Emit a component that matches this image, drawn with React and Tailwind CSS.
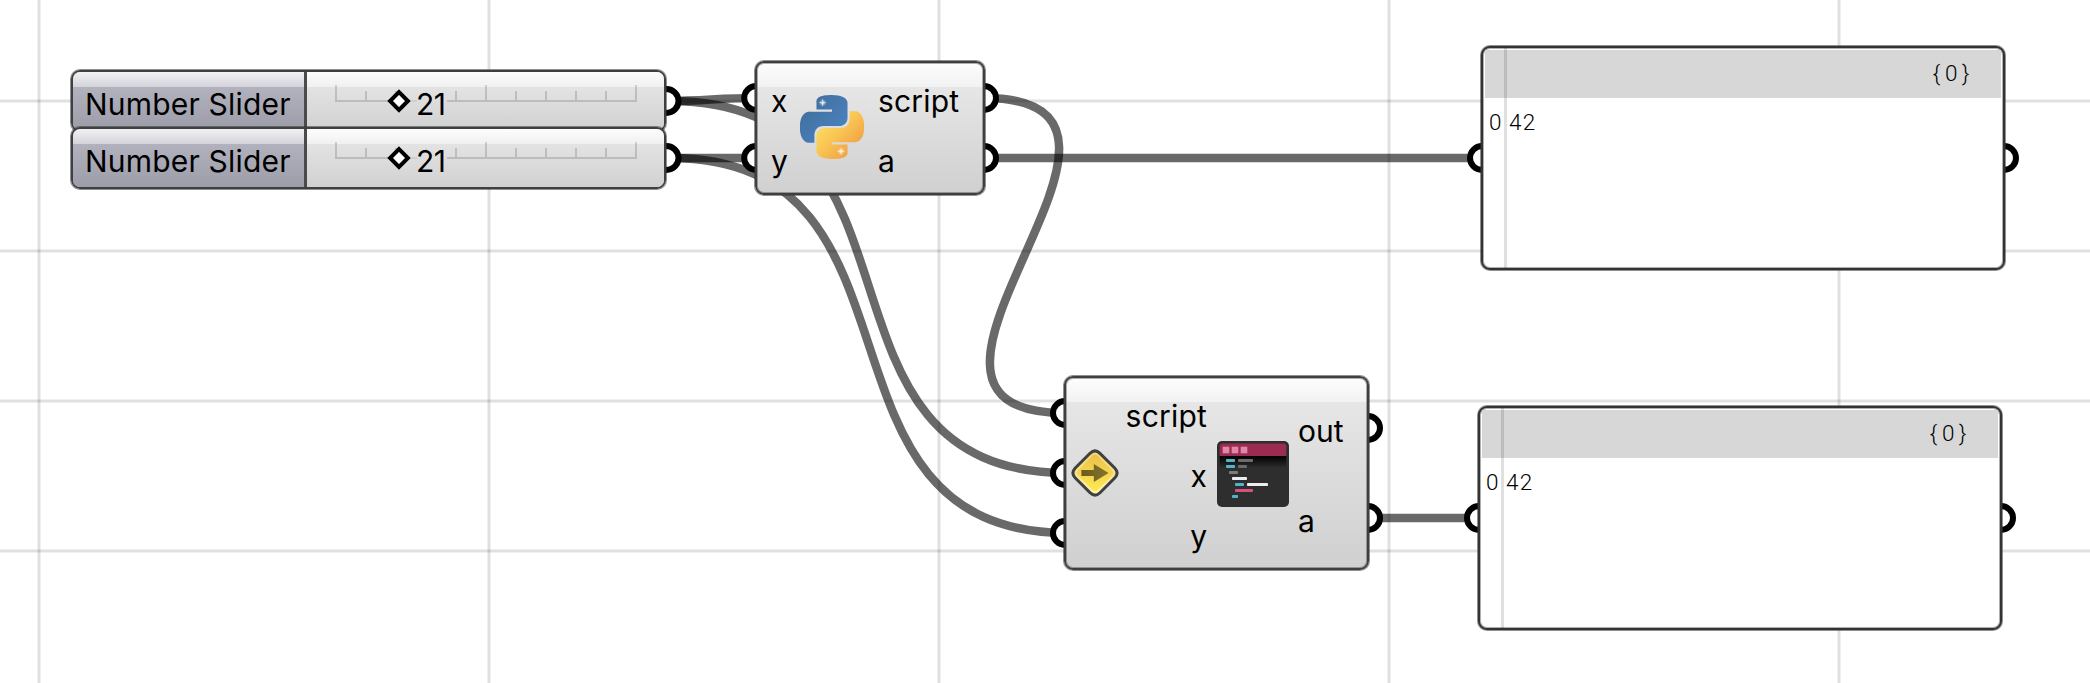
const NODE =
  "absolute box-border rounded-[9px] border-2 border-[#3e3f3f] shadow-[0_0_0_1px_rgba(50,54,50,0.55),inset_0_0_0_1px_rgba(50,54,50,0.4)]";
const LABEL = "text-[30px] leading-[60px] text-black whitespace-nowrap";

const wires = [
  "M667 101C705 101 718 98 756 98",
  "M667 158H756",
  "M670 101C948 101 790 473 1068 473",
  "M670 158C944 158 794 533 1068 533",
  "M984 98C1206 98 843 413 1065 413",
  "M984 158H1482",
  "M1368 518H1479",
];

const grips = [
  [666.5, 101], [666.5, 158], [756.2, 98], [756.2, 158], [984, 98], [984, 158],
  [1065, 413], [1065, 473], [1065, 533], [1368, 428], [1368, 518],
  [1482, 158], [2004, 158], [1479, 518], [2001, 518],
];

function Canvas() {
  return (
    <svg className="absolute inset-0" width="2090" height="683" viewBox="0 0 2090 683" fill="none">
      <g stroke="#000" strokeOpacity="0.12" strokeWidth="3">
        {[39, 489, 939, 1389, 1839].map((x) => <path key={x} d={`M${x} 0V683`} />)}
        {[101, 251, 401, 551].map((y) => <path key={y} d={`M0 ${y}H2090`} />)}
      </g>
      {wires.map((d) => <path key={d} d={d} stroke="#000" strokeOpacity="0.59" strokeWidth="8.5" />)}
      {grips.map(([x, y]) => (
        <circle key={`${x}-${y}`} cx={x} cy={y} r="12" fill="#fff" stroke="#000" strokeWidth="6" />
      ))}
    </svg>
  );
}

function Track() {
  const ticks = [0, 1, 2, 4, 5, 6, 7, 8, 9, 10];
  return (
    <svg width="358" height="58" viewBox="308 72 358 58" className="absolute inset-0" fill="none">
      <g stroke="#000" strokeOpacity="0.15" strokeWidth="2">
        <path d="M336 101H389M448 101H638" />
        <path d="M412 101H418" strokeOpacity="0.06" />
        {ticks.map((i) => (
          <path key={i} d={`M${337 + i * 30} ${i % 5 === 0 ? 85 : 91}V100`} />
        ))}
        <path d="M427 91V94" strokeOpacity="0.06" />
      </g>
      <path d="M400 92.1L408.9 101L400 109.9L391.1 101Z" fill="#fff" stroke="#000" strokeWidth="4" />
    </svg>
  );
}

function Slider({ className }) {
  return (
    <div className={`${NODE} ${className} left-[71px] flex h-[62px] w-[595px] overflow-hidden`}>
      <div className="flex w-[234px] shrink-0 items-center border-r-[3px] border-[#4a4b4b] bg-[linear-gradient(to_bottom,#f1f1f5_0px,#d3d3da_15px,#b2b2be_15px,#9d9da9_100%)] pl-[12px] pt-[5px]">
        <span className="text-[30px] leading-[40px] tracking-[0.2px] whitespace-nowrap text-black">Number Slider</span>
      </div>
      <div className="relative flex grow items-center bg-[linear-gradient(to_bottom,#fdfdfd_0px,#f0f0f0_15px,#e3e3e3_15px,#d1d1d1_100%)] pl-[109px] pt-[5px]">
        <Track />
        <span className="relative text-[30px] leading-[40px] tracking-[-0.6px] text-black">21</span>
      </div>
    </div>
  );
}

const PY =
  "M14.25.18l.9.2.73.26.59.3.45.32.34.34.25.34.16.33.1.3.04.26.02.2-.01.13V8.5l-.05.63-.13.55-.21.46-.26.38-.3.31-.33.25-.35.19-.35.14-.33.1-.3.07-.26.04-.21.02H8.77l-.69.05-.59.14-.5.22-.41.27-.33.32-.27.35-.2.36-.15.37-.1.35-.07.32-.04.27-.02.21v3.06H3.17l-.21-.03-.28-.07-.32-.12-.35-.18-.36-.26-.36-.36-.35-.46-.32-.59-.28-.73-.21-.88-.14-1.05-.05-1.23.06-1.22.16-1.04.24-.87.32-.71.36-.57.4-.44.42-.33.42-.24.4-.16.36-.1.32-.05.24-.01h.16l.06.01h8.16v-.83H6.18l-.01-2.75-.02-.37.05-.34.11-.31.17-.28.25-.26.31-.23.38-.2.44-.18.51-.15.58-.12.64-.1.71-.06.77-.04.84-.02 1.27.05z";

function PythonIcon() {
  return (
    <svg width="64" height="64" viewBox="0 0 24 24" className="shrink-0">
      <defs>
        <linearGradient id="pyBlue" x1="0" y1="0" x2="1" y2="1">
          <stop offset="0.2" stopColor="#42719f" />
          <stop offset="1" stopColor="#4c86c8" />
        </linearGradient>
        <linearGradient id="pyGold" x1="1" y1="1" x2="0.1" y2="0.1">
          <stop offset="0.1" stopColor="#fbe266" />
          <stop offset="0.5" stopColor="#f9c653" />
          <stop offset="0.9" stopColor="#f1a045" />
        </linearGradient>
        <radialGradient id="spark">
          <stop offset="0.15" stopColor="#fff" />
          <stop offset="1" stopColor="#fff" stopOpacity="0" />
        </radialGradient>
      </defs>
      <path d={PY} fill="url(#pyBlue)" />
      <path d={PY} transform="rotate(180 12 12)" fill="url(#pyGold)" />
      <circle cx="8.5" cy="2.9" r="1.5" fill="url(#spark)" opacity="0.55" />
      <path d="M8.5 1.3L8.8 2.6L10.1 2.9L8.8 3.2L8.5 4.5L8.2 3.2L6.9 2.9L8.2 2.6Z" fill="#fff" opacity="0.65" />
      <circle cx="15.4" cy="21.1" r="1.5" fill="url(#spark)" opacity="0.55" />
      <path d="M15.4 19.5L15.7 20.8L17 21.1L15.7 21.4L15.4 22.7L15.1 21.4L13.8 21.1L15.1 20.8Z" fill="#fff" opacity="0.65" />
    </svg>
  );
}

function EditorIcon() {
  const rows = [
    [9, 18, 9, "#52b4cc"], [21, 18, 15, "#6b6b6b"],
    [9, 24, 9, "#52b4cc"], [21, 24, 9, "#6b6b6b"],
    [12, 30, 9, "#7b7b7b"], [15, 36, 15, "#ececec"],
    [18, 42, 9, "#52b4cc"], [30, 42, 21, "#ececec"],
    [18, 48, 18, "#d84f80"], [15, 54, 6, "#52b4cc"],
  ];
  return (
    <svg width="72" height="66" viewBox="0 0 72 66" className="shrink-0">
      <defs>
        <linearGradient id="editorShade" x1="0" y1="0" x2="0" y2="1">
          <stop offset="0" stopColor="#000" />
          <stop offset="1" stopColor="#2e2e2e" />
        </linearGradient>
      </defs>
      <rect width="72" height="66" rx="5" fill="#2e2e2e" />
      <rect x="2.7" y="15" width="66.6" height="12" fill="url(#editorShade)" />
      <path d="M2.7 15V5.5Q2.7 2.5 5.7 2.5H66.3Q69.3 2.5 69.3 5.5V15Z" fill="#9b2b50" />
      {[5.7, 14.7, 23.7].map((x) => <rect key={x} x={x} y="5.7" width="6.6" height="6.6" fill="#e086aa" />)}
      {rows.map(([x, y, w, c]) => <rect key={`${x}-${y}`} x={x} y={y} width={w} height="3" rx="0.8" fill={c} />)}
    </svg>
  );
}

function InputMarker() {
  return (
    <svg width="50" height="50" viewBox="-25 -25 50 50" className="shrink-0">
      <defs>
        <linearGradient id="markFill" x1="0" y1="0" x2="0" y2="1">
          <stop offset="0" stopColor="#ebc04e" />
          <stop offset="1" stopColor="#ffea52" />
        </linearGradient>
        <linearGradient id="markEdge" x1="0" y1="0" x2="0" y2="1">
          <stop offset="0" stopColor="#f4d06a" />
          <stop offset="1" stopColor="#fff6b8" />
        </linearGradient>
        <linearGradient id="markArrow" x1="0" y1="0" x2="1" y2="0">
          <stop offset="0" stopColor="#6b5c1c" />
          <stop offset="1" stopColor="#85742a" />
        </linearGradient>
      </defs>
      <path d="M-5 -19.7Q0 -24.5 5 -19.7L19.7 -5Q24.5 0 19.7 5L5 19.7Q0 24.5 -5 19.7L-19.7 5Q-24.5 0 -19.7 -5Z" fill="url(#markEdge)" stroke="#404141" strokeWidth="3" />
      <path d="M-2 -17.5Q0 -19 2 -17.5L17.5 -2Q19 0 17.5 2L2 17.5Q0 19 -2 17.5L-17.5 2Q-19 0 -17.5 -2Z" fill="url(#markFill)" />
      <path d="M-13.6 -3H-1.2V-9L13.6 0L-1.2 9V3H-13.6Z" fill="url(#markArrow)" />
    </svg>
  );
}

const BODY =
  "bg-[linear-gradient(to_bottom,#fdfdfd_0px,#f2f2f2_24px,#e6e6e6_24px,#d0d0d0_100%)]";

function PythonNode() {
  return (
    <div className={`${NODE} ${BODY} left-[755px] top-[61px] flex h-[134px] w-[230px] pl-[14px] pt-[8px]`}>
      <div className={`${LABEL} flex w-[29px] flex-col`}>
        <span>x</span>
        <span>y</span>
      </div>
      <div className="flex h-[112px] items-center"><PythonIcon /></div>
      <div className={`${LABEL} ml-[14px] flex flex-col`}>
        <span className="tracking-[0.2px]">script</span>
        <span>a</span>
      </div>
    </div>
  );
}

function ScriptNode() {
  return (
    <div className={`${NODE} ${BODY} left-[1064px] top-[376px] flex h-[194px] w-[305px] pt-[8px]`}>
      <div className="flex h-[174px] w-[57px] items-center justify-center"><InputMarker /></div>
      <div className={`${LABEL} flex w-[84px] flex-col text-right`}>
        <span className="tracking-[0.2px]">script</span>
        <span>x</span>
        <span>y</span>
      </div>
      <div className="ml-[10px] flex h-[176px] items-center"><EditorIcon /></div>
      <div className={`${LABEL} ml-[9px] flex flex-col gap-[30px] pt-[15px]`}>
        <span>out</span>
        <span>a</span>
      </div>
    </div>
  );
}

function Panel({ className }) {
  return (
    <div className={`${NODE} ${className} h-[224px] w-[524px] overflow-hidden border-[#333333] bg-white px-[2px] pt-[2px] font-['Roboto',sans-serif] text-[22.5px] font-light text-black`}>
      <div className="flex h-[48px] justify-end bg-[#d7d7d7] pr-[27px]">
        <span className="leading-[46px] tracking-[4.6px]">{"{0}"}</span>
      </div>
      <div className="flex h-[48px] items-center pl-[4px] leading-[46px]">
        <span className="w-[20px]">0</span>
        <span className="tracking-[1.2px]">42</span>
      </div>
      <div className="absolute bottom-0 left-[21px] top-0 w-[3px] bg-black/12" />
    </div>
  );
}

export default function App() {
  return (
    <div className="relative h-[683px] w-[2090px] overflow-hidden bg-white font-['Inter',sans-serif]">
      <Canvas />
      <Slider className="top-[70px]" />
      <Slider className="top-[127px]" />
      <PythonNode />
      <ScriptNode />
      <Panel className="left-[1481px] top-[46px]" />
      <Panel className="left-[1478px] top-[406px]" />
    </div>
  );
}
